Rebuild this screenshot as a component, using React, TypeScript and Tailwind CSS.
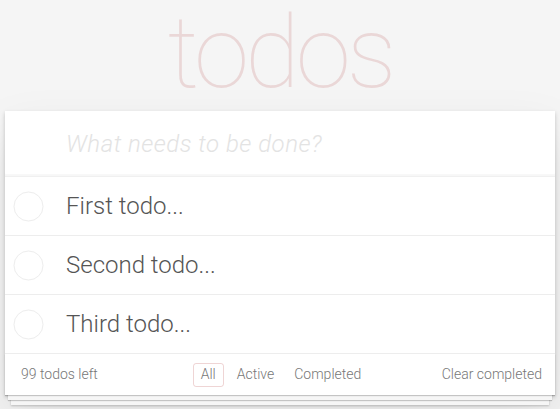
import React from "react";

const todos = ["First todo...", "Second todo...", "Third todo..."];

export default function App() {
  return (
    <div className="min-h-[409px] bg-[#f5f5f5] text-[#4d4d4d] font-['Roboto','Liberation_Sans',sans-serif] font-light">
      <section className="mx-auto w-[550px]">
        <div className="h-[111px]">
          <h1 className="text-center text-[100px] font-thin leading-[118px] -translate-y-[6px] tracking-[-4px] text-[rgba(175,47,47,0.15)]">
            todos
          </h1>
        </div>
        <div className="bg-white shadow-[0_2px_4px_0_rgba(0,0,0,0.2),0_25px_50px_0_rgba(0,0,0,0.1)]">
          <div className="h-[66px] flex items-center pl-[61px] shadow-[inset_0_-2px_1px_rgba(0,0,0,0.03)] border-b border-[#f0f0f0]">
            <span className="text-[24px] italic font-light tracking-[0.5px] text-[#e3e3e3]">What needs to be done?</span>
          </div>
          <ul>
            {todos.map((t) => (
              <li key={t} className="h-[59px] flex items-center border-b border-[#ededed]">
                <div className="w-[45px] flex justify-center pl-[2px]">
                  <svg width="31" height="31" viewBox="0 0 31 31">
                    <circle cx="15.5" cy="15.5" r="14.5" fill="none" stroke="#ededed" strokeWidth="1" />
                  </svg>
                </div>
                <span className="pl-[16px] text-[24px] leading-[29px] text-[#555] font-light">{t}</span>
              </li>
            ))}
          </ul>
          <footer className="relative h-[41px] pl-[16px] pr-[13px] flex items-center text-[14px] text-[#777] shadow-[0_1px_1px_rgba(0,0,0,0.2),0_8px_0_-3px_#f6f6f6,0_9px_1px_-3px_rgba(0,0,0,0.2),0_16px_0_-6px_#f6f6f6,0_17px_2px_-6px_rgba(0,0,0,0.2)]">
            <span className="w-[160px]">99 todos left</span>
            <div className="flex-1 flex justify-center items-center gap-[6px] pr-[2px]">
              <span className="px-[7px] h-[24px] flex items-center rounded-[3px] border border-[rgba(175,47,47,0.2)]">All</span>
              <span className="px-[7px] h-[24px] flex items-center">Active</span>
              <span className="px-[7px] h-[24px] flex items-center">Completed</span>
            </div>
            <span className="w-[160px] text-right">Clear completed</span>
          </footer>
        </div>
      </section>
    </div>
  );
}
